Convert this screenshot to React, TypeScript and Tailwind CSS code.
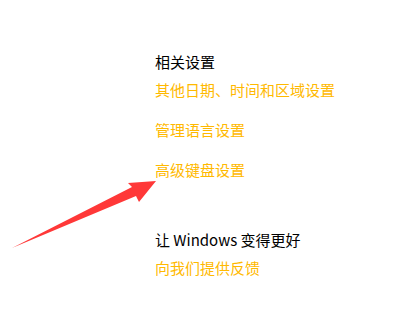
import React from "react";

export default function App() {
  const font = { fontFamily: '"Noto Sans CJK SC", "Noto Sans", sans-serif' };
  return (
    <div className="relative w-[401px] h-[324px] bg-white overflow-hidden" style={font}>
      <div className="flex flex-col pl-[155px] pt-[52px] text-[15px] leading-[20px]">
        <div className="text-black">相关设置</div>
        <div className="mt-[8px] text-[#ffb900]">其他日期、时间和区域设置</div>
        <div className="mt-[20px] text-[#ffb900]">管理语言设置</div>
        <div className="mt-[20px] text-[#ffb900]">高级键盘设置</div>
        <div className="mt-[50px] text-black">让 Windows 变得更好</div>
        <div className="mt-[8px] text-[#ffb900]">向我们提供反馈</div>
      </div>
      <svg className="absolute inset-0" width="401" height="324" viewBox="0 0 401 324">
        <polygon
          points="12,248 132,187 128,183 156,181 139,202 136,196"
          fill="#ff3838"
        />
      </svg>
    </div>
  );
}
